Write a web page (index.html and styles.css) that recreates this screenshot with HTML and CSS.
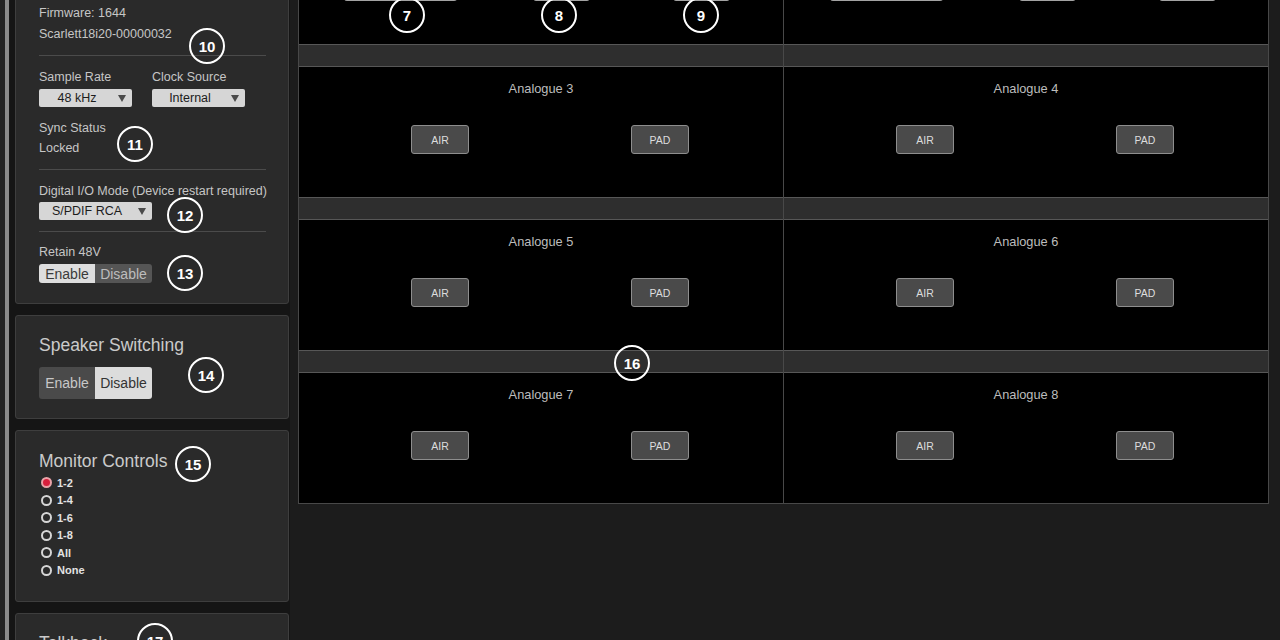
FILE: index.html
```html
<!DOCTYPE html>
<html lang="en">
<head>
<meta charset="utf-8">
<title>Scarlett MixControl</title>
<link rel="stylesheet" href="styles.css">
</head>
<body>
<div class="app">
  <aside class="side">
    <div class="edge"></div>
    <div class="panels">
      <section class="panel panel-device">
        <div class="info">Device: Scarlett 18i20 (USB 2.0)</div>
        <div class="info">Firmware: 1644</div>
        <div class="info">Scarlett18i20-00000032</div>
        <span class="badge b10">10</span>
        <div class="sep sep-first"></div>
        <div class="fields">
          <div class="field">
            <div class="lbl">Sample Rate</div>
            <div class="select"><span>48 kHz</span><i></i></div>
          </div>
          <div class="field">
            <div class="lbl">Clock Source</div>
            <div class="select"><span>Internal</span><i></i></div>
          </div>
        </div>
        <div class="sync">
          <div class="line">Sync Status</div>
          <div class="line">Locked</div>
        </div>
        <span class="badge b11">11</span>
        <div class="sep"></div>
        <div class="lbl lbl-gap">Digital I/O Mode (Device restart required)</div>
        <div class="select select-wide"><span>S/PDIF RCA</span><i></i></div>
        <span class="badge b12">12</span>
        <div class="sep"></div>
        <div class="lbl lbl-gap2">Retain 48V</div>
        <div class="seg seg-small"><span class="on">Enable</span><span class="off">Disable</span></div>
        <span class="badge b13">13</span>
      </section>

      <section class="panel panel-speaker">
        <h2 class="title">Speaker Switching</h2>
        <div class="seg seg-big"><span class="off">Enable</span><span class="on">Disable</span></div>
        <span class="badge b14">14</span>
      </section>

      <section class="panel panel-monitor">
        <h2 class="title">Monitor Controls</h2>
        <span class="badge b15">15</span>
        <ul class="radios">
          <li class="radio"><span class="dot sel"></span>1-2</li>
          <li class="radio"><span class="dot"></span>1-4</li>
          <li class="radio"><span class="dot"></span>1-6</li>
          <li class="radio"><span class="dot"></span>1-8</li>
          <li class="radio"><span class="dot"></span>All</li>
          <li class="radio"><span class="dot"></span>None</li>
        </ul>
      </section>

      <section class="panel panel-talk">
        <h2 class="title">Talkback</h2>
        <span class="badge b17">17</span>
      </section>
    </div>
  </aside>

  <main class="main">
    <div class="grid">
      <div class="cell">
        <div class="band"></div>
        <div class="body">
          <div class="name">Analogue 1</div>
          <div class="btns btns-top">
            <div class="tbtn tbtn-wide gain">INST</div>
            <div class="tbtn tbtn-mid">AIR</div>
            <div class="tbtn tbtn-last">PAD</div>
          </div>
          <span class="badge b7">7</span>
          <span class="badge b8">8</span>
          <span class="badge b9">9</span>
        </div>
      </div>
      <div class="cell">
        <div class="band"></div>
        <div class="body">
          <div class="name">Analogue 2</div>
          <div class="btns btns-top btns-top-r">
            <div class="tbtn tbtn-wide gain">INST</div>
            <div class="tbtn tbtn-mid2">AIR</div>
            <div class="tbtn tbtn-last">PAD</div>
          </div>
        </div>
      </div>

      <div class="cell">
        <div class="band"></div>
        <div class="body">
          <div class="name">Analogue 3</div>
          <div class="btns"><div class="btn">AIR</div><div class="btn">PAD</div></div>
        </div>
      </div>
      <div class="cell">
        <div class="band"></div>
        <div class="body">
          <div class="name">Analogue 4</div>
          <div class="btns"><div class="btn">AIR</div><div class="btn">PAD</div></div>
        </div>
      </div>

      <div class="cell">
        <div class="band"></div>
        <div class="body">
          <div class="name">Analogue 5</div>
          <div class="btns"><div class="btn">AIR</div><div class="btn">PAD</div></div>
        </div>
      </div>
      <div class="cell">
        <div class="band"></div>
        <div class="body">
          <div class="name">Analogue 6</div>
          <div class="btns"><div class="btn">AIR</div><div class="btn">PAD</div></div>
        </div>
      </div>

      <div class="cell">
        <div class="band"></div>
        <div class="body">
          <div class="name">Analogue 7</div>
          <div class="btns"><div class="btn">AIR</div><div class="btn">PAD</div></div>
        </div>
        <span class="badge b16">16</span>
      </div>
      <div class="cell">
        <div class="band"></div>
        <div class="body">
          <div class="name">Analogue 8</div>
          <div class="btns"><div class="btn">AIR</div><div class="btn">PAD</div></div>
        </div>
      </div>
    </div>
  </main>
</div>
</body>
</html>
```

FILE: styles.css
```css
* { box-sizing: border-box; }

html, body {
  margin: 0;
  padding: 0;
  width: 1280px;
  height: 640px;
  overflow: hidden;
  background: #1c1c1c;
  font-family: "Liberation Sans", Arial, Helvetica, sans-serif;
}

.app {
  display: flex;
  height: 640px;
  overflow: hidden;
}

/* ---------- sidebar ---------- */
.side {
  width: 290px;
  flex: none;
  display: flex;
  align-items: flex-start;
  background: #151515;
  border-left: 5px solid #222222;
}

.edge {
  width: 4px;
  height: 640px;
  flex: none;
  background: #8a8a8a;
}

.panels {
  width: 274px;
  margin-left: 6px;
  margin-top: -31px;
  display: flex;
  flex-direction: column;
  gap: 11px;
}

.panel {
  position: relative;
  background: #2a2a2a;
  border: 1px solid #3e3e3e;
  border-radius: 3px;
  padding: 12px 22px 20px 23px;
  color: #c6c6c6;
  font-size: 12.5px;
}

.info {
  line-height: 21px;
}

.sep {
  height: 1px;
  background: #4b4b4b;
  margin-top: 11px;
}

.sep-first {
  margin-top: 10px;
}

.fields {
  display: flex;
  gap: 20px;
  margin-top: 13px;
}

.field {
  width: 93px;
}

.lbl {
  line-height: 16px;
  white-space: nowrap;
}

.field .select {
  margin-top: 4px;
}

.select {
  width: 93px;
  height: 18px;
  display: flex;
  align-items: center;
  background: #d6d6d6;
  border-radius: 2px;
  color: #1c1c1c;
  font-size: 12.5px;
}

.select span {
  flex: 1;
  text-align: center;
}

.select i {
  width: 0;
  height: 0;
  margin: 0 6px 0 3px;
  border-left: 4px solid transparent;
  border-right: 4px solid transparent;
  border-top: 7px solid #4a4a4a;
}

.select-wide {
  width: 113px;
  margin-top: 3px;
}

.sync {
  margin-top: 11px;
}

.sync .line {
  line-height: 20px;
}

.lbl-gap {
  margin-top: 13px;
}

.lbl-gap2 {
  margin-top: 12px;
}

.seg {
  display: flex;
  width: 113px;
  border-radius: 3px;
  overflow: hidden;
  font-size: 14px;
}

.seg span {
  display: flex;
  align-items: center;
  justify-content: center;
}

.seg span:first-child { width: 56px; }
.seg span:last-child { width: 57px; }

.seg-small {
  height: 19px;
  margin-top: 4px;
}

.seg-small .on { background: #dedede; color: #3a3a3a; }
.seg-small .off { background: #555555; color: #bdbdbd; }

.seg-big {
  height: 32px;
  margin-top: 11px;
}

.seg-big .on { background: #dcdcdc; color: #333333; }
.seg-big .off { background: #4a4a4a; color: #c8c8c8; }

.title {
  margin: 0;
  font-size: 17.5px;
  font-weight: normal;
  line-height: 22px;
  color: #cacaca;
}

.panel-speaker { padding-top: 18px; padding-bottom: 19px; }
.panel-monitor { padding-top: 19px; padding-bottom: 22px; }
.panel-talk { padding-top: 18px; height: 80px; }

.radios {
  list-style: none;
  margin: 2px 0 0;
  padding: 0;
}

.radio {
  display: flex;
  align-items: center;
  height: 17.5px;
  font-size: 11px;
  font-weight: bold;
  color: #e2e2e2;
}

.dot {
  width: 11px;
  height: 11px;
  margin-left: 2px;
  margin-right: 5px;
  border: 2px solid #d6d6d6;
  border-radius: 50%;
}

.dot.sel {
  background: #d81f3c;
  border-color: #e9a3a8;
}

/* ---------- annotation badges ---------- */
.badge {
  position: absolute;
  width: 36px;
  height: 36px;
  border: 2px solid #ffffff;
  border-radius: 50%;
  display: flex;
  align-items: center;
  justify-content: center;
  color: #ffffff;
  font-size: 15px;
  font-weight: bold;
  line-height: 1;
}

.b10 { left: 173px; top: 58px; }
.b11 { left: 101px; top: 156px; }
.b12 { left: 151px; top: 227px; }
.b13 { left: 151px; top: 285px; }
.b14 { left: 172px; top: 41px; }
.b15 { left: 159px; top: 15px; }
.b17 { left: 121px; top: 9px; }

.b7 { left: 90px; top: 83px; }
.b8 { left: 242px; top: 83px; }
.b9 { left: 384px; top: 83px; }
.b16 { left: 315px; top: -5px; }

/* ---------- channel grid ---------- */
.main {
  flex: 1;
  padding-left: 8px;
}

.grid {
  width: 971px;
  margin-top: -109px;
  display: grid;
  grid-template-columns: 484px 484px;
  column-gap: 1px;
  background: #484848;
  border: 1px solid #484848;
  border-top: 0;
}

.cell {
  position: relative;
  display: flex;
  flex-direction: column;
}

.band {
  height: 23px;
  background: #2e2e2e;
  border-top: 1px solid #575757;
  border-bottom: 1px solid #575757;
}

.body {
  position: relative;
  height: 130px;
  padding-top: 14px;
  background: #000000;
}

.name {
  text-align: center;
  font-size: 12.8px;
  line-height: 16px;
  color: #bdbdbd;
}

.btns {
  display: flex;
  margin-top: 28px;
  padding-left: 112px;
  gap: 162px;
}

.btn {
  width: 58px;
  height: 29px;
  display: flex;
  align-items: center;
  justify-content: center;
  background: #4a4a4a;
  border: 1px solid #8e8e8e;
  border-radius: 3px;
  color: #dddddd;
  font-size: 10.5px;
}

.btns-top {
  padding-left: 0;
  gap: 0;
}

.tbtn {
  height: 29px;
  display: flex;
  align-items: center;
  justify-content: center;
  background: #4a4a4a;
  border: 1px solid #a3a3a3;
  border-radius: 3px;
  color: #dddddd;
  font-size: 10.5px;
}

.tbtn-wide { width: 113px; margin-left: 45px; }
.btns-top-r .tbtn-wide { margin-left: 46px; }
.tbtn-mid { width: 57px; margin-left: 76px; }
.tbtn-mid2 { width: 57px; margin-left: 76px; }
.tbtn-last { width: 57px; margin-left: 83px; }

.gain {
  background: linear-gradient(90deg, #8a4a32 0%, #6a5a52 45%, #4a4a4a 100%);
  border-color: #b08a78 #a3a3a3 #a3a3a3 #b07a60;
}
```
